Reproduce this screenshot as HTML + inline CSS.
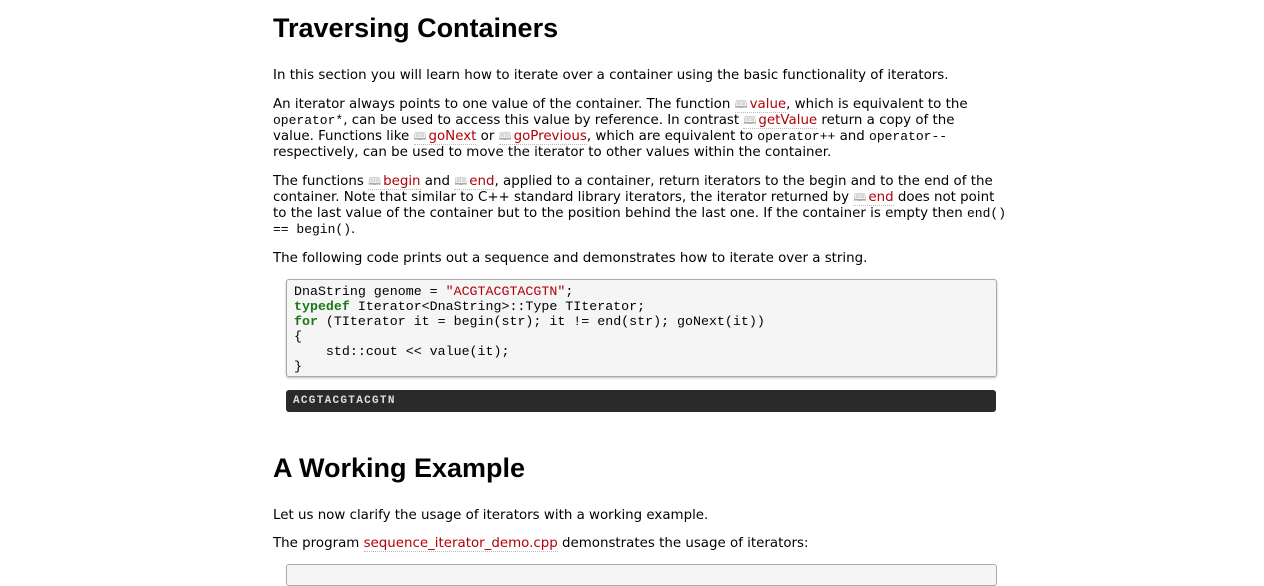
<!DOCTYPE html>
<html><head><meta charset="utf-8"><style>
body{margin:0;background:#fff;font-family:"DejaVu Sans","Liberation Sans",sans-serif;font-size:13.4px;color:#000;}
h1{font-family:"Liberation Sans",sans-serif;font-weight:bold;font-size:27px;margin:0;position:absolute;left:273px;}
p{margin:0;line-height:16px;position:absolute;left:273px;width:760px;white-space:nowrap;}
a{color:#b0000a;text-decoration:none;border-bottom:1px dotted #bbb;}
.b{color:#aaa;font-size:11px;margin-right:2px;}
code{font-family:"Liberation Mono",monospace;font-size:13px;}
.code{position:absolute;left:286px;width:702px;top:279px;height:92px;border:1px solid #aaa;border-radius:3px;background:#f5f5f5;box-shadow:0 1px 2px #bbb;padding:4px 0 0 7px;font-family:"Liberation Mono",monospace;font-size:13.3px;line-height:15px;white-space:pre;}
.k{color:#1a7a1a;font-weight:bold}.s{color:#b0000a}
.out{position:absolute;left:286px;width:703px;top:390px;height:16px;background:#2a2a2a;border-radius:3px;padding:5px 0 1px 7px;color:#ddd;font-family:"Liberation Mono",monospace;font-size:11px;letter-spacing:1.3px;font-weight:bold;}
</style></head><body>
<h1 style="top:13px">Traversing Containers</h1>
<p style="top:68px">In this section you will learn how to iterate over a container using the basic functionality of iterators.</p>
<p style="top:97px">An iterator always points to one value of the container. The function <a><span class="b">&#x1F56E;</span>value</a>, which is equivalent to the<br><code>operator*</code>, can be used to access this value by reference. In contrast <a><span class="b">&#x1F56E;</span>getValue</a> return a copy of the<br>value. Functions like <a><span class="b">&#x1F56E;</span>goNext</a> or <a><span class="b">&#x1F56E;</span>goPrevious</a>, which are equivalent to <code>operator++</code> and <code>operator--</code><br>respectively, can be used to move the iterator to other values within the container.</p>
<p style="top:174px">The functions <a><span class="b">&#x1F56E;</span>begin</a> and <a><span class="b">&#x1F56E;</span>end</a>, applied to a container, return iterators to the begin and to the end of the<br>container. Note that similar to C++ standard library iterators, the iterator returned by <a><span class="b">&#x1F56E;</span>end</a> does not point<br>to the last value of the container but to the position behind the last one. If the container is empty then <code>end()</code><br><code>== begin()</code>.</p>
<p style="top:251px">The following code prints out a sequence and demonstrates how to iterate over a string.</p>
<div class="code">DnaString genome = <span class="s">"ACGTACGTACGTN"</span>;
<span class="k">typedef</span> Iterator&lt;DnaString&gt;::Type TIterator;
<span class="k">for</span> (TIterator it = begin(str); it != end(str); goNext(it))
{
    std::cout &lt;&lt; value(it);
}</div>
<div class="out">ACGTACGTACGTN</div>
<h1 style="top:453px">A Working Example</h1>
<p style="top:508px">Let us now clarify the usage of iterators with a working example.</p>
<p style="top:536px">The program <a>sequence_iterator_demo.cpp</a> demonstrates the usage of iterators:</p>
<div style="position:absolute;left:286px;width:709px;top:564px;height:20px;border:1px solid #aaa;background:#f5f5f5;border-radius:3px"></div>
</body></html>
